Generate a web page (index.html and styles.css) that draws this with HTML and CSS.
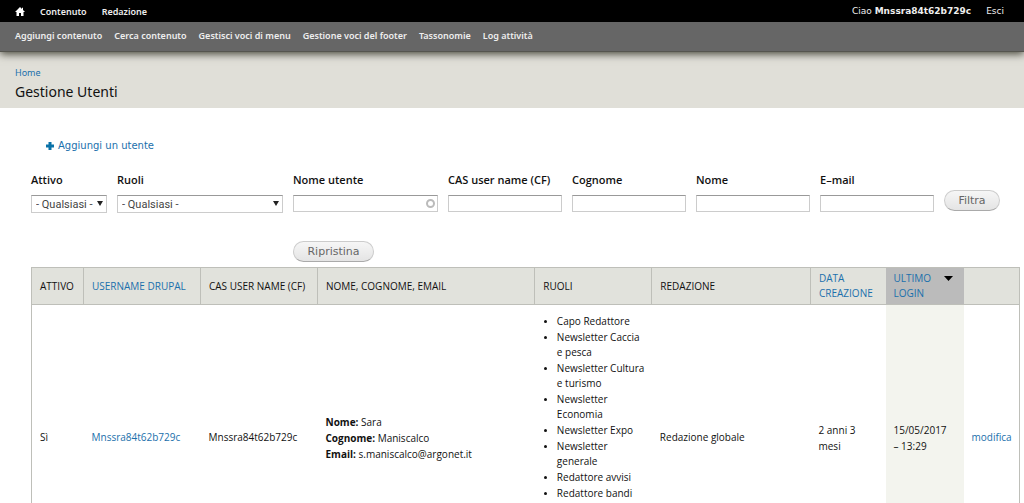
FILE: index.html
```html
<!DOCTYPE html>
<html lang="it">
<head>
<meta charset="utf-8">
<title>Gestione Utenti</title>
<link rel="stylesheet" href="styles.css">
</head>
<body>
<header class="toolbar">
  <div class="toolbar-menu">
    <a class="home" href="#" aria-label="Home"><svg width="10" height="9" viewBox="0 0 10 9"><path d="M5 0 0 5h1.500V9h2.500V6h2v3h2.500V5H10L8 3V.8H7V2z" fill="#fff"/></svg></a>
    <a href="#">Contenuto</a>
    <a href="#">Redazione</a>
    <div class="account"><a href="#">Ciao <strong>Mnssra84t62b729c</strong></a><a href="#">Esci</a></div>
  </div>
  <nav class="shortcuts">
    <a href="#">Aggiungi contenuto</a>
    <a href="#">Cerca contenuto</a>
    <a href="#">Gestisci voci di menu</a>
    <a href="#">Gestione voci del footer</a>
    <a href="#">Tassonomie</a>
    <a href="#">Log attività</a>
  </nav>
</header>
<div class="branding">
  <a class="crumb" href="#">Home</a>
  <h1>Gestione Utenti</h1>
</div>
<main class="content">
  <a class="add-user" href="#"><svg width="8" height="8" viewBox="0 0 8 8"><path d="M2.500 0h3v2.500H8v3H5.500V8h-3V5.500H0v-3h2.500z" fill="#0a72a8"/></svg>Aggiungi un utente</a>
  <form class="filters">
    <div class="field"><label for="attivo">Attivo</label><div class="select"><select id="attivo"><option>- Qualsiasi -</option></select></div></div>
    <div class="field"><label for="ruoli">Ruoli</label><div class="select"><select id="ruoli"><option>- Qualsiasi -</option></select></div></div>
    <div class="field"><label for="utente">Nome utente</label><div class="autocomplete"><input type="text" id="utente"></div></div>
    <div class="field"><label for="cas">CAS user name (CF)</label><input type="text" id="cas"></div>
    <div class="field"><label for="cognome">Cognome</label><input type="text" id="cognome"></div>
    <div class="field"><label for="nome">Nome</label><input type="text" id="nome"></div>
    <div class="field"><label for="email">E–mail</label><input type="text" id="email"></div>
    <button type="submit" class="apply">Filtra</button>
    <button type="reset" class="reset">Ripristina</button>
  </form>
  <table class="users">
    <colgroup><col class="c-active"><col class="c-name"><col class="c-name"><col class="c-person"><col class="c-name"><col class="c-office"><col class="c-date"><col class="c-login"><col class="c-edit"></colgroup>
    <thead>
      <tr>
        <th>Attivo</th>
        <th><a href="#">Username Drupal</a></th>
        <th>CAS user name (CF)</th>
        <th>Nome, Cognome, Email</th>
        <th>Ruoli</th>
        <th>Redazione</th>
        <th><a href="#">Data creazione</a></th>
        <th class="sorted"><a href="#"><span>Ultimo login</span><svg width="9" height="5" viewBox="0 0 9 5"><path d="M0 0h9L4.500 5z"/></svg></a></th>
        <th></th>
      </tr>
    </thead>
    <tbody>
      <tr>
        <td>Sì</td>
        <td><a href="#">Mnssra84t62b729c</a></td>
        <td>Mnssra84t62b729c</td>
        <td class="person"><strong>Nome:</strong> Sara<br><strong>Cognome:</strong> Maniscalco<br><strong>Email:</strong> s.maniscalco@argonet.it</td>
        <td class="roles">
          <ul>
            <li>Capo Redattore</li>
            <li>Newsletter Caccia e pesca</li>
            <li>Newsletter Cultura e turismo</li>
            <li>Newsletter Economia</li>
            <li>Newsletter Expo</li>
            <li>Newsletter generale</li>
            <li>Redattore avvisi</li>
            <li>Redattore bandi</li>
          </ul>
        </td>
        <td>Redazione globale</td>
        <td class="date">2 anni 3 mesi</td>
        <td class="date active">15/05/2017 <span class="time">– 13:29</span></td>
        <td><a href="#">modifica</a></td>
      </tr>
    </tbody>
  </table>
</main>
</body>
</html>
```
FILE: styles.css
```css
*, *::before, *::after { box-sizing: border-box; }
body {
  margin: 0;
  background: #fff;
  color: #111;
  font: 10px/15px "Noto Sans", "Open Sans", sans-serif;
}
a { color: #1a70ac; text-decoration: none; }
svg { display: block; flex: none; }

.toolbar {
  position: relative;
  font-size: 9px;
  font-weight: 600;
  box-shadow: 0 2px 8px #444438;
}
.toolbar a { color: #eee; }
.toolbar-menu {
  display: flex;
  align-items: center;
  gap: 15px;
  height: 22px;
  padding: 0 20px 0 15px;
  background: #000;
}
.account {
  display: flex;
  gap: 15px;
  margin-left: auto;
  font-family: "DejaVu Sans", sans-serif;
  font-weight: 400;
}
.shortcuts {
  display: flex;
  gap: 12px;
  padding: 6px 15px 8px;
  background: #666;
  border-bottom: 1px solid #55554e;
}

.branding { padding: 13px 15px 5px; background: #e0dfd8; }
.crumb { display: block; font-size: 9px; }
h1 { margin: 0; font-size: 14px; font-weight: 400; line-height: 23px; }

.content { padding: 30px 4px 0 31px; }
.add-user {
  display: flex;
  align-items: center;
  gap: 4px;
  margin-left: 15px;
  font: 10px/15px "DejaVu Sans", sans-serif;
}

.filters {
  display: grid;
  grid-template-columns: 76fr 166fr 145fr 114fr 114fr 114fr 114fr 56fr;
  column-gap: 10px;
  margin: 19px 20px 5px 0;
}
.field { min-width: 0; }
.field label {
  display: block;
  margin-bottom: 8px;
  font-family: "Open Sans", sans-serif;
  font-size: 11px;
  font-weight: 600;
  white-space: nowrap;
}
.field input, .field select {
  display: block;
  width: 100%;
  height: 17px;
  border: 1px solid #ccc;
  border-top-color: #999;
  background: #fff;
  color: #444;
}
.field select {
  appearance: none;
  height: 18px;
  padding: 0 4px;
  border-radius: 0;
  font: 11px Roboto, sans-serif;
}
.select, .autocomplete { position: relative; }
.select::after {
  content: "";
  position: absolute;
  top: 6px;
  right: 4px;
  border: 3px solid transparent;
  border-top: 5px solid #222;
  border-bottom: 0;
}
.autocomplete::after {
  content: "";
  position: absolute;
  top: 4px;
  right: 3px;
  width: 9px;
  height: 9px;
  border: 2px solid #bbb;
  border-radius: 50%;
}
button {
  height: 21px;
  padding: 0;
  border: 1px solid #ccc;
  border-bottom-color: #aaa;
  border-radius: 11px;
  background: linear-gradient(#f6f6f6, #e4e4e4);
  color: #666;
  font: 11px "DejaVu Sans", sans-serif;
}
.apply { margin-top: 18px; }
.reset { grid-column: 3; width: 81px; margin-top: 28px; }

.users {
  width: 100%;
  border: 1px solid #bebfb9;
  border-collapse: collapse;
  table-layout: fixed;
  font-family: "Open Sans", sans-serif;
}
.c-active { width: 52px; }
.c-name { width: 117px; }
.c-person { width: 22%; }
.c-date { width: 75px; }
.c-login { width: 78px; }
.c-edit { width: 56px; }
th {
  height: 37px;
  padding: 3px 8px;
  background: #e1e2dc;
  border: 1px solid #bebfb9;
  border-width: 1px 0 1px 1px;
  font-size: 10px;
  font-weight: 400;
  text-align: left;
  text-transform: uppercase;
}
th:nth-child(n+8) { border-left: 0; }
.sorted { background: #bbb; }
.sorted a { display: flex; justify-content: space-between; }
.sorted svg { margin: 5px 3px 0 0; }
td { height: 266px; padding: 9px 7px 9px 8px; vertical-align: middle; }
.person { line-height: 16px; }
.date { line-height: 16px; }
.time { white-space: nowrap; }
.active { background: #f3f4ee; }
.roles { vertical-align: top; }
.roles ul { margin: 0; padding: 0 0 0 14px; }
.roles li { margin-bottom: 1px; }
.roles li::marker { font-size: 8px; }
```
